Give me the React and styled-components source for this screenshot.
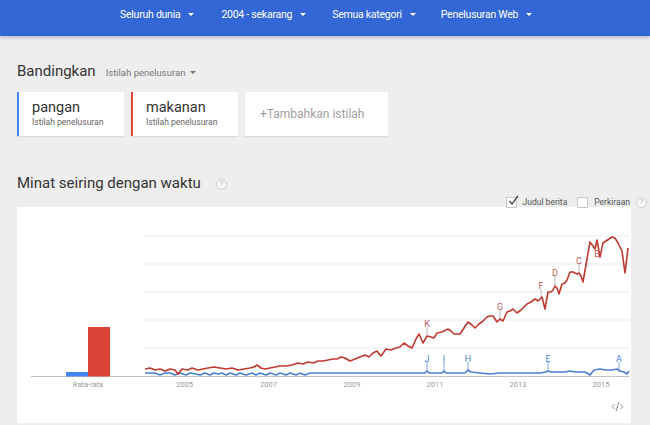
import React from "react";
import styled, { createGlobalStyle } from "styled-components";
import { CodeXml } from "lucide-react";

const GlobalStyle = createGlobalStyle`
  html, body { margin: 0; padding: 0; }
  body {
    background: #eeeeee;
    font-family: Roboto, "Liberation Sans", Arial, sans-serif;
    width: 650px;
    overflow: hidden;
  }
`;

const Page = styled.div`
  display: flex;
  flex-direction: column;
  width: 650px;
  height: 425px;
  overflow: hidden;
`;

const TopBar = styled.div`
  height: 36px;
  background: #3367d6;
  box-shadow: 0 2px 3px rgba(40, 60, 120, 0.25);
  display: flex;
  align-items: flex-start;
  padding: 8px 0 0 120px;
  box-sizing: border-box;
  position: relative;
  z-index: 1;
`;

const NavItem = styled.div`
  display: flex;
  align-items: center;
  gap: 8px;
  color: #ffffff;
  font-size: 10.5px;
  line-height: 13px;
  margin-right: ${(p) => p.$gap}px;
  letter-spacing: -0.25px;
`;

const Caret = styled.span`
  width: 0;
  height: 0;
  border-left: 3px solid transparent;
  border-right: 3px solid transparent;
  border-top: 3px solid ${(p) => p.$color || "#ffffff"};
  display: inline-block;
`;

const Section = styled.div`
  padding: ${(p) => p.$pad};
`;

const CompareHeader = styled.div`
  display: flex;
  align-items: center;
  height: 18px;
`;

const Heading = styled.div`
  font-size: 15px;
  color: #333;
  line-height: 18px;
`;

const SubSelect = styled.div`
  display: flex;
  align-items: center;
  gap: 5px;
  margin-left: 10px;
  font-size: 9.5px;
  color: #777;
  padding-top: 2px;
`;

const Cards = styled.div`
  display: flex;
  gap: 7px;
  margin-top: 12px;
`;

const TermCard = styled.div`
  width: ${(p) => p.$w}px;
  height: 44px;
  box-sizing: border-box;
  background: #fff;
  border-left: ${(p) => (p.$color ? `2px solid ${p.$color}` : "none")};
  box-shadow: 0 1px 1px rgba(0, 0, 0, 0.08);
  padding: 7px 0 0 ${(p) => (p.$color ? 13 : 15)}px;
  display: flex;
  flex-direction: column;
`;

const TermName = styled.div`
  font-size: 14.5px;
  color: #333;
  line-height: 17px;
`;

const TermSub = styled.div`
  font-size: 8.5px;
  color: #666;
  line-height: 11px;
  margin-top: 1px;
`;

const AddTerm = styled.div`
  font-size: 12px;
  color: #9e9e9e;
  line-height: 16px;
  margin-top: 7px;
`;

const TitleRow = styled.div`
  display: flex;
  align-items: center;
  gap: 15px;
  margin-top: 37px;
  height: 20px;
`;

const Title = styled.div`
  font-size: 15px;
  color: #333;
  line-height: 20px;
`;

const Help = styled.span`
  width: 9px;
  height: 9px;
  border-radius: 50%;
  border: 1px solid #cfcfcf;
  color: #b5b5b5;
  font-size: 7px;
  line-height: 9px;
  text-align: center;
  display: inline-block;
  margin-top: ${(p) => p.$mt || 0}px;
  background: #f6f6f6;
`;

const Options = styled.div`
  display: flex;
  justify-content: flex-end;
  align-items: center;
  height: 10px;
  margin-top: 4px;
  padding-right: 3px;
  position: relative;
  z-index: 1;
`;

const Option = styled.label`
  display: flex;
  align-items: center;
  gap: 6px;
  font-size: 8.5px;
  color: #555;
  margin-right: ${(p) => p.$mr}px;
`;

const Box = styled.span`
  width: 9px;
  height: 9px;
  border: 1px solid #c8c8c8;
  background: #fff;
  position: relative;
  display: inline-block;
  svg {
    position: absolute;
    left: 1px;
    top: -3px;
  }
`;

const ChartCard = styled.div`
  width: 614px;
  height: 216px;
  margin-left: 17px;
  background: #fff;
  display: flex;
  flex-direction: column;
`;

const ChartSvg = styled.svg`
  display: block;
  font-family: Roboto, "Liberation Sans", Arial, sans-serif;
`;

const ChartFooter = styled.div`
  flex: 1;
  display: flex;
  justify-content: flex-end;
  align-items: center;
  padding-right: 7px;
  color: #777;
  padding-bottom: 4px;
`;

const navItems = [
  { label: "Seluruh dunia", gap: 27 },
  { label: "2004 - sekarang", gap: 26 },
  { label: "Semua kategori", gap: 25 },
  { label: "Penelusuran Web", gap: 0 },
];

const redPts = [[145,368],[150,367],[155,369],[160,368],[165,370],[170,368],[175,369],[178,373],[182,368],[188,369],[192,367],[198,369],[203,368],[208,367],[214,366],[220,367],[226,368],[232,367],[238,369],[244,368],[250,367],[254,366],[257,364],[261,367],[265,368],[270,367],[275,366],[280,365],[286,365],[292,364],[298,362],[303,363],[308,361],[313,362],[318,360],[323,360],[328,359],[333,358],[337,358],[341,356],[345,357],[350,360],[355,358],[360,356],[365,354],[369,356],[373,352],[377,350],[381,355],[386,348],[391,349],[396,347],[400,346],[404,342],[408,345],[412,347],[416,338],[419,333],[423,342],[427,335],[431,336],[434,337],[437,332],[442,331],[448,328],[451,330],[454,333],[460,333],[464,327],[468,321],[472,324],[475,327],[479,323],[483,320],[487,316],[490,315],[493,315],[497,321],[500,318],[503,320],[507,311],[510,310],[513,308],[517,312],[521,309],[524,306],[527,303],[531,301],[535,298],[538,300],[541,297],[542,296],[545,308],[548,291],[551,291],[553,289],[555,285],[557,287],[559,293],[562,283],[565,282],[567,279],[570,271],[573,271],[575,272],[577,273],[579,272],[581,275],[583,281],[587,258],[590,241],[593,245],[595,248],[597,239],[600,256],[603,242],[606,240],[609,238],[612,236],[615,237],[618,242],[622,250],[625,272],[628,247]];

const bluePts = [[145,372],[150,372],[155,372],[160,374],[165,372],[170,372],[175,374],[180,372],[186,374],[190,372],[196,373],[200,374],[205,372],[210,374],[214,372],[218,373],[222,372],[226,374],[230,372],[236,374],[240,372],[246,374],[252,372],[256,374],[260,372],[266,374],[270,372],[276,374],[280,372],[286,374],[290,372],[296,374],[300,372],[305,374],[310,372],[425,372],[427,370],[429,372],[442,372],[444,370],[446,372],[465,372],[468,369],[471,371],[480,372],[490,373],[500,372],[540,372],[546,371],[548,370],[552,371],[565,371],[570,370],[575,371],[585,371],[590,374],[594,369],[600,368],[606,369],[612,369],[617,368],[620,370],[624,371],[627,373],[629,370]];

const redMarks = [
  { l: "K", x: 427, y: 322, t1: 326, t2: 334 },
  { l: "G", x: 500, y: 305, t1: 309, t2: 318 },
  { l: "F", x: 541, y: 284, t1: 288, t2: 296 },
  { l: "D", x: 555, y: 271, t1: 275, t2: 284 },
  { l: "C", x: 579, y: 259, t1: 263, t2: 271 },
  { l: "B", x: 597, y: 252, t1: 0, t2: 0 },
];

const blueMarks = [
  { l: "J", x: 427 },
  { l: "I", x: 444 },
  { l: "H", x: 468 },
  { l: "E", x: 548 },
  { l: "A", x: 619 },
];

const years = [
  { t: "2005", x: 184.5 },
  { t: "2007", x: 268.5 },
  { t: "2009", x: 352 },
  { t: "2011", x: 435 },
  { t: "2013", x: 518 },
  { t: "2015", x: 601 },
];

const grid = [235, 263, 291, 319, 347];

const toPath = (pts) => pts.map((p, i) => `${i ? "L" : "M"}${p[0]} ${p[1]}`).join(" ");

function Chart() {
  return (
    <ChartSvg width="614" height="186" viewBox="17 206 614 186">
      {grid.map((y) => (
        <line key={y} x1="144" x2="630" y1={y} y2={y} stroke="#ebebeb" strokeWidth="1" />
      ))}
      <line x1="31" x2="630" y1="375.5" y2="375.5" stroke="#c4c4c4" strokeWidth="1" />
      <rect x="66" y="371" width="22" height="4.5" fill="#4285f4" />
      <rect x="88" y="326" width="22" height="49.5" fill="#db4437" />
      <text x="88" y="386" fontSize="7.5" fill="#9a9a9a" textAnchor="middle">Rata-rata</text>
      {years.map((yr) => (
        <text key={yr.t} x={yr.x} y="386" fontSize="7.5" fill="#9a9a9a" textAnchor="middle">{yr.t}</text>
      ))}
      {redMarks.filter((m) => m.t1).map((m) => (
        <line key={m.l} x1={m.x} x2={m.x} y1={m.t1} y2={m.t2} stroke="#b9b9b9" strokeWidth="1" />
      ))}
      {blueMarks.map((m) => (
        <line key={m.l} x1={m.x} x2={m.x} y1="361" y2="371" stroke="#7ea3de" strokeWidth="1" />
      ))}
      <path d={toPath(bluePts)} fill="none" stroke="#4a7fd3" strokeWidth="1.6" strokeLinejoin="round" />
      <path d={toPath(redPts)} fill="none" stroke="#c0392f" strokeWidth="1.6" strokeLinejoin="round" />
      {redMarks.map((m) => (
        <text key={m.l} x={m.x} y={m.y + 3.5} fontSize="9" fill="#b85a55" textAnchor="middle">{m.l}</text>
      ))}
      {blueMarks.map((m) => (
        <text key={m.l} x={m.x} y="360.5" fontSize="9" fill="#4a7fd3" textAnchor="middle">{m.l}</text>
      ))}
    </ChartSvg>
  );
}

export default function App() {
  return (
    <Page>
      <GlobalStyle />
      <TopBar>
        {navItems.map((n) => (
          <NavItem key={n.label} $gap={n.gap}>
            {n.label}
            <Caret />
          </NavItem>
        ))}
      </TopBar>
      <Section $pad="26px 17px 0">
        <CompareHeader>
          <Heading>Bandingkan</Heading>
          <SubSelect>
            Istilah penelusuran
            <Caret $color="#777" />
          </SubSelect>
        </CompareHeader>
        <Cards>
          <TermCard $w={107} $color="#4285f4">
            <TermName>pangan</TermName>
            <TermSub>Istilah penelusuran</TermSub>
          </TermCard>
          <TermCard $w={107} $color="#db4437">
            <TermName>makanan</TermName>
            <TermSub>Istilah penelusuran</TermSub>
          </TermCard>
          <TermCard $w={143}>
            <AddTerm>+Tambahkan istilah</AddTerm>
          </TermCard>
        </Cards>
        <TitleRow>
          <Title>Minat seiring dengan waktu</Title>
          <Help $mt={3}>?</Help>
        </TitleRow>
      </Section>
      <Options>
        <Option $mr={10}>
          <Box>
            <svg width="11" height="11" viewBox="0 0 11 11">
              <path d="M1.5 6 L4 9 L10 1" fill="none" stroke="#444" strokeWidth="1.3" />
            </svg>
          </Box>
          Judul berita
        </Option>
        <Option $mr={6}>
          <Box />
          Perkiraan
        </Option>
        <Help>?</Help>
      </Options>
      <ChartCard>
        <Chart />
        <ChartFooter>
          <CodeXml size={13} strokeWidth={1.6} />
        </ChartFooter>
      </ChartCard>
    </Page>
  );
}
